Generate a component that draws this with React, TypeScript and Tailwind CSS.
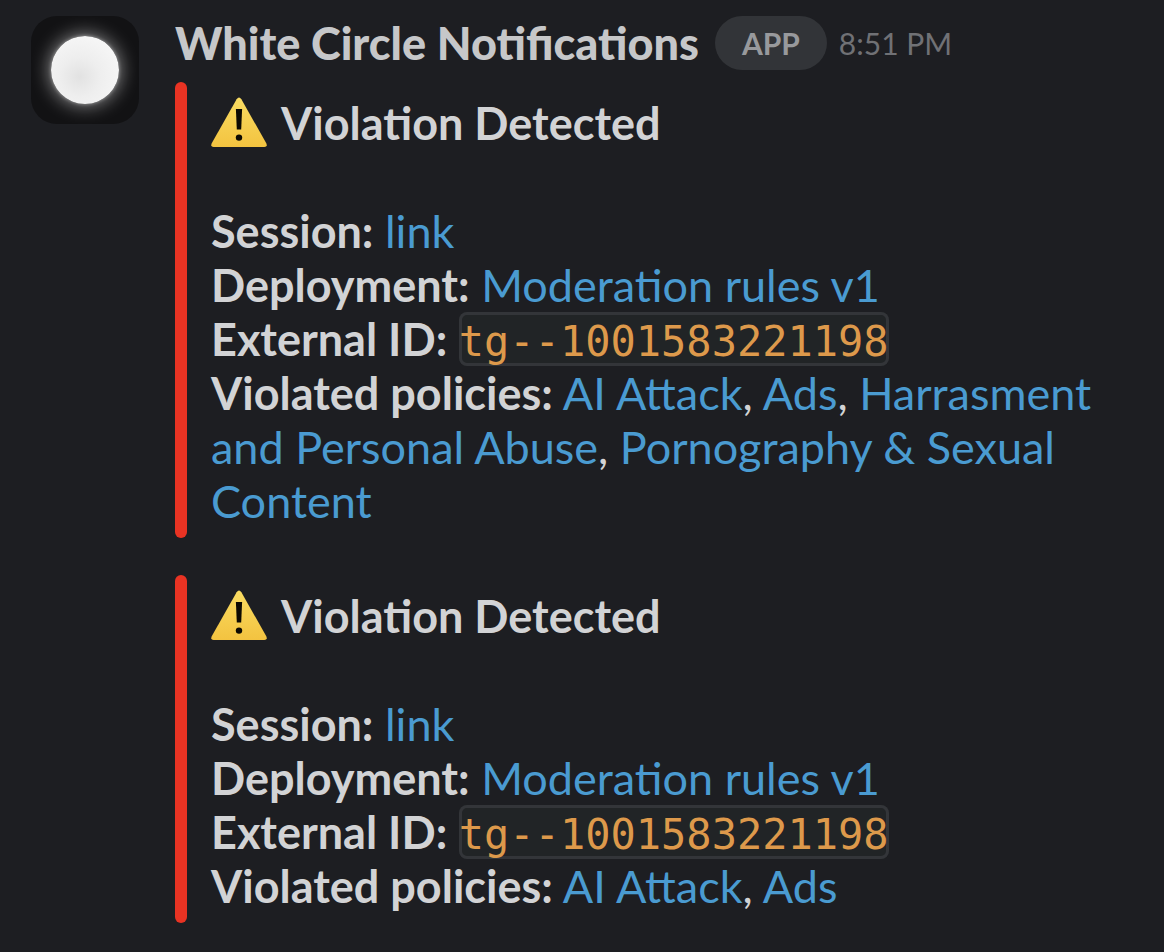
import React from "react";

type Violation = {
  deployment: string;
  externalId: string;
  policies: string[];
};

const violations: Violation[] = [
  {
    deployment: "Moderation rules v1",
    externalId: "tg--1001583221198",
    policies: [
      "AI Attack",
      "Ads",
      "Harrasment and Personal Abuse",
      "Pornography & Sexual Content",
    ],
  },
  {
    deployment: "Moderation rules v1",
    externalId: "tg--1001583221198",
    policies: ["AI Attack", "Ads"],
  },
];

const Avatar = () => (
  <div className="flex h-[108px] w-[108px] shrink-0 items-center justify-center rounded-[26px] bg-[#121214]">
    <div className="h-[68px] w-[68px] rounded-full bg-[radial-gradient(circle_at_42%_60%,#e2e2e2_0%,#eeeeee_35%,#f6f6f6_75%)] shadow-[0_0_3px_1px_rgba(255,255,255,0.25),0_0_18px_2px_rgba(255,255,255,0.5)]"></div>
  </div>
);

const WarningIcon = () => (
  <svg className="h-[54px] w-14 shrink-0" viewBox="0 0 56 54" aria-hidden="true">
    <defs>
      <linearGradient id="warning-fill" x1="0" y1="0" x2="0" y2="1">
        <stop offset="0" stopColor="#f9dc62" />
        <stop offset="1" stopColor="#f3c340" />
      </linearGradient>
    </defs>
    <path
      d="M25.6 3.2Q28 -0.2 30.4 3.2L55.4 47.6Q56.6 51 53.4 51H2.6Q-0.6 51 0.6 47.6Z"
      fill="url(#warning-fill)"
    />
    <path d="M24.9 13H31.1L30.2 33.6H25.8Z" fill="#0c0a02" />
    <circle cx="28" cy="41.6" r="3.2" fill="#0c0a02" />
  </svg>
);

const SlackLink = ({ children }: { children: React.ReactNode }) => (
  <a href="#" className="text-[#4a9bd1]">
    {children}
  </a>
);

const Attachment = ({ deployment, externalId, policies }: Violation) => (
  <section className="flex gap-6">
    <div className="w-3 shrink-0 rounded-full bg-[#e93323]"></div>
    <div className="min-w-0 flex-1 pt-[14px] pb-[10px]">
      <h2 className="mb-[54px] flex items-center gap-[14px] font-bold">
        <WarningIcon />
        Violation Detected
      </h2>
      <p>
        <b>Session:</b> <SlackLink>link</SlackLink>
      </p>
      <p>
        <b>Deployment:</b> <SlackLink>{deployment}</SlackLink>
      </p>
      <p>
        <b>External ID:</b>{" "}
        <code className="rounded-lg bg-[#212426] pt-[5px] font-['DejaVu_Sans_Mono',monospace] text-[42px] leading-[48px] text-[#dd994b] shadow-[inset_0_0_0_3px_#333539]">
          {externalId}
        </code>
      </p>
      <p>
        <b>Violated policies:</b>{" "}
        {policies.map((policy, i) => (
          <React.Fragment key={policy}>
            {i > 0 && ", "}
            <SlackLink>{policy}</SlackLink>
          </React.Fragment>
        ))}
      </p>
    </div>
  </section>
);

const App = () => {
  return (
    <main className="flex min-h-screen gap-9 bg-[#1d1e22] pt-4 pr-9 pb-7 pl-[31px] font-['Lato',sans-serif] text-[45px] leading-[54px] text-[#d2d3d5]">
      <Avatar />
      <div className="min-w-0 flex-1">
        <header className="mb-3 flex items-center">
          <h1 className="font-black text-[#c6c7c9]">White Circle Notifications</h1>
          <span className="ml-4 rounded-full bg-[#323438] px-[27px] text-[30px] font-bold text-[#98999c]">
            APP
          </span>
          <time className="ml-3 text-[30px] text-[#707175]">8:51 PM</time>
        </header>
        <div className="flex flex-col gap-[37px]">
          {violations.map((violation, i) => (
            <Attachment key={i} {...violation} />
          ))}
        </div>
      </div>
    </main>
  );
};

export default App;
